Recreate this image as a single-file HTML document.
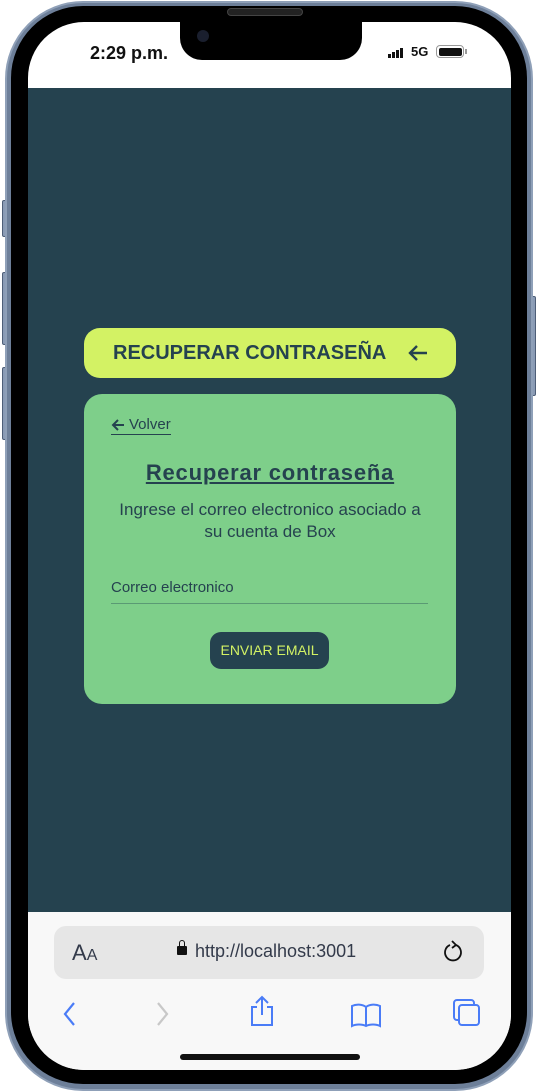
<!DOCTYPE html>
<html><head><meta charset="utf-8"><style>
*{margin:0;padding:0;box-sizing:border-box}
body{width:538px;height:1092px;background:#fff;position:relative;overflow:hidden;font-family:"Liberation Sans",sans-serif}
.btn{position:absolute;background:#8a9bb5;border:1px solid #4e5f78;border-radius:2px}
.frame{position:absolute;left:5px;top:1px;width:528px;height:1090px;border-radius:78px;background:#6d7f99;border:2px solid #8fa0b8}
.black{position:absolute;left:11px;top:6px;width:516px;height:1078px;border-radius:72px;background:#000}
.screen{position:absolute;left:28px;top:22px;width:483px;height:1048px;border-radius:56px;background:#fff;overflow:hidden}
.notch{position:absolute;left:180px;top:22px;width:182px;height:38px;background:#000;border-radius:0 0 22px 22px}
.spk{position:absolute;left:227px;top:8px;width:76px;height:8px;border-radius:4px;background:#222;border:1px solid #444}
.content{position:absolute;left:0;top:66px;width:483px;height:824px;background:#25424f}
.bar{position:absolute;left:0;top:890px;width:483px;height:160px;background:#f8f8f8}
.title{position:absolute;left:56px;top:240px;width:372px;height:50px;background:#d3f264;border-radius:16px;color:#25424f;font-weight:bold;font-size:20px;line-height:50px;padding-left:29px;white-space:nowrap}
.card{position:absolute;left:56px;top:306px;width:372px;height:310px;background:#7ecf8a;border-radius:18px;color:#25424f;text-align:center}
</style></head><body>
<div class="btn" style="left:2px;top:200px;width:5px;height:37px"></div>
<div class="btn" style="left:2px;top:272px;width:5px;height:73px"></div>
<div class="btn" style="left:2px;top:367px;width:5px;height:73px"></div>
<div class="btn" style="left:531px;top:296px;width:5px;height:100px"></div>
<div class="frame"></div>
<div class="black"></div>
<div class="screen">
 <div style="position:absolute;left:62px;top:21px;font-weight:bold;font-size:18px;color:#111">2:29 p.m.</div>
 <div style="position:absolute;left:360px;top:26px;display:flex;align-items:flex-end;gap:1px">
  <span style="width:3px;height:4px;background:#111"></span><span style="width:3px;height:6px;background:#111"></span><span style="width:3px;height:8px;background:#111"></span><span style="width:3px;height:10px;background:#111"></span>
 </div>
 <div style="position:absolute;left:383px;top:22px;font-weight:bold;font-size:13px;color:#111">5G</div>
 <div style="position:absolute;left:408px;top:23px;width:28px;height:13px;border:1.5px solid #999;border-radius:4px;padding:1.5px"><div style="width:100%;height:100%;background:#111;border-radius:2px"></div></div>
 <div style="position:absolute;left:437px;top:27px;width:2px;height:5px;background:#999"></div>
 <div class="content">
  <div class="title">RECUPERAR CONTRASEÑA</div>
  <svg style="position:absolute;left:379px;top:255px" width="22" height="20"><path d="M20 10 H3 M10 3 L3 10 L10 17" fill="none" stroke="#25424f" stroke-width="2.4"/></svg>
  <div class="card">
   <div style="position:absolute;left:27px;top:22px;font-size:15px;border-bottom:1.5px solid #25424f;line-height:18px;display:flex;align-items:center;gap:4px"><svg width="14" height="12"><path d="M13 6 H2 M7 1 L2 6 L7 11" fill="none" stroke="#25424f" stroke-width="2"/></svg>Volver</div>
   <div style="position:absolute;left:0;width:372px;top:66px;font-size:22px;font-weight:bold;text-decoration:underline;letter-spacing:0.8px">Recuperar contraseña</div>
   <div style="position:absolute;left:0;width:372px;top:105px;font-size:17px;line-height:22px">Ingrese el correo electronico asociado a<br>su cuenta de Box</div>
   <div style="position:absolute;left:27px;top:185px;font-size:15px;text-align:left">Correo electronico</div>
   <div style="position:absolute;left:27px;top:209px;width:317px;height:1px;background:#5a9a74"></div>
   <div style="position:absolute;left:126px;top:238px;width:119px;height:37px;background:#25424f;border-radius:11px;color:#d3f264;font-size:14px;line-height:37px">ENVIAR EMAIL</div>
  </div>
 </div>
 <div class="bar">
  <div style="position:absolute;left:26px;top:14px;width:430px;height:53px;background:#e6e6e6;border-radius:12px">
   <div style="position:absolute;left:18px;top:14px;font-size:22px;color:#333a4a">A<span style="font-size:16px">A</span></div>
   <div style="position:absolute;left:123px;top:20px;width:10px;height:9px;background:#111;border-radius:1px"></div>
   <div style="position:absolute;left:125px;top:14px;width:6px;height:8px;border:1.5px solid #111;border-bottom:none;border-radius:3px 3px 0 0"></div>
   <div style="position:absolute;left:141px;top:15px;font-size:18px;color:#333a4a">http://localhost:3001</div>
   <svg style="position:absolute;left:388px;top:14px" width="22" height="24" viewBox="0 0 22 24"><path d="M8 5 A8 8 0 1 0 14 5" fill="none" stroke="#111" stroke-width="1.8"/><path d="M10 1 L14 5 L10 8" fill="none" stroke="#111" stroke-width="1.8"/></svg>
  </div>
  <svg style="position:absolute;left:32px;top:88px" width="20" height="28"><path d="M14 3 L5 14 L14 25" fill="none" stroke="#4a7cf7" stroke-width="2.2"/></svg>
  <svg style="position:absolute;left:124px;top:88px" width="20" height="28"><path d="M6 3 L15 14 L6 25" fill="none" stroke="#c8c8c8" stroke-width="2.2"/></svg>
  <svg style="position:absolute;left:220px;top:82px" width="28" height="34"><path d="M9 13 H4 V31 H24 V13 H19 M14 21 V3 M8 9 L14 3 L20 9" fill="none" stroke="#4a7cf7" stroke-width="2"/></svg>
  <svg style="position:absolute;left:322px;top:90px" width="32" height="26"><path d="M16 5 C12 2 6 2 2 4 V24 C6 22 12 22 16 24 C20 22 26 22 30 24 V4 C26 2 20 2 16 5 V24" fill="none" stroke="#4a7cf7" stroke-width="2"/></svg>
  <svg style="position:absolute;left:424px;top:86px" width="30" height="30"><rect x="2" y="2" width="20" height="20" rx="3" fill="none" stroke="#4a7cf7" stroke-width="2"/><rect x="7" y="7" width="20" height="20" rx="3" fill="#f8f8f8" stroke="#4a7cf7" stroke-width="2"/></svg>
  <div style="position:absolute;left:152px;top:142px;width:180px;height:6px;background:#111;border-radius:3px"></div>
 </div>
</div>
<div class="notch"></div>
<div class="spk"></div>
<div style="position:absolute;left:197px;top:30px;width:12px;height:12px;border-radius:50%;background:#1a1f2e"></div>
</body></html>
